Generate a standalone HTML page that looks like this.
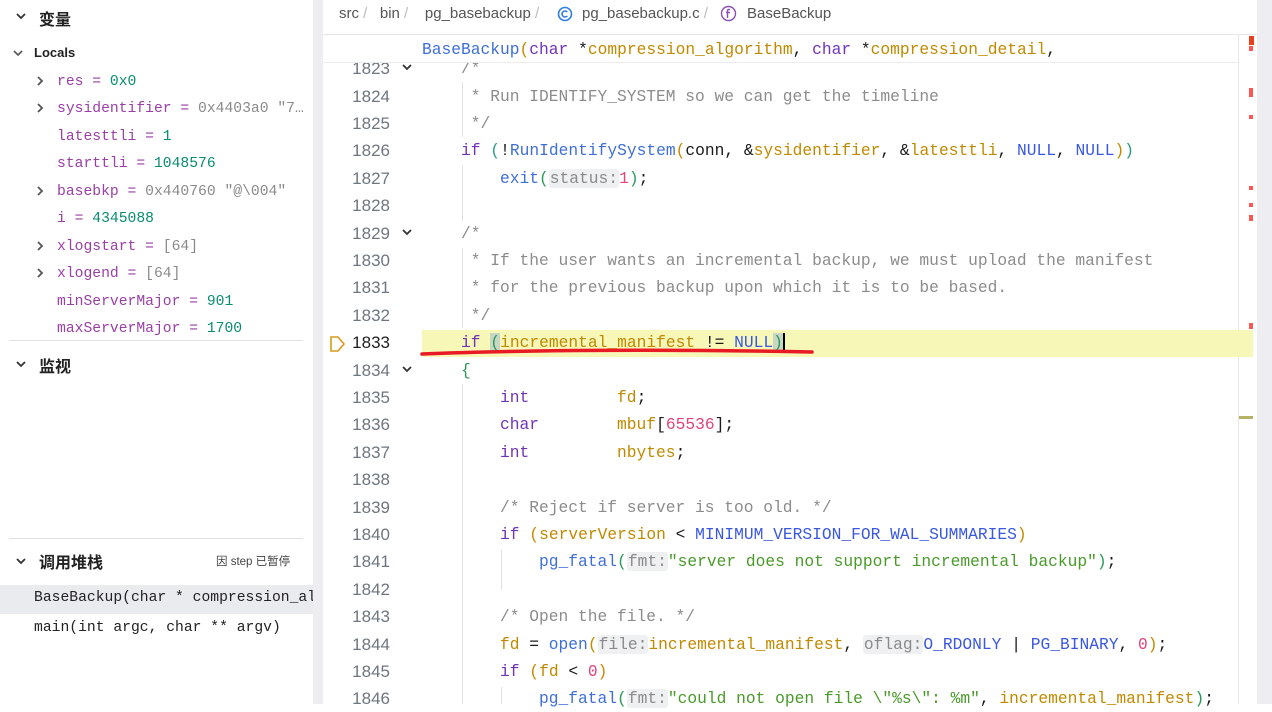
<!DOCTYPE html>
<html><head><meta charset="utf-8"><style>
*{margin:0;padding:0;box-sizing:border-box}
body{width:1272px;height:704px;overflow:hidden;background:#fff;position:relative;font-family:"Liberation Sans","Noto Sans CJK SC",sans-serif}
.abs{position:absolute}
.mono{font-family:"Liberation Mono","DejaVu Sans Mono",monospace;white-space:pre}
.left{left:0;top:0;width:313px;height:704px;background:#fff}
.sb{left:313px;top:0;width:10px;height:704px;background:#eeeef2}
.v{left:57px;font-size:14.7px;line-height:20px;color:#9a3fa6}
.v .n{color:#0a8c72}.v .g{color:#8a8a8a}
.code{font-size:16.25px;color:#1a1a1a}
.ln{position:absolute;left:330px;width:60px;text-align:right;font-family:"Liberation Sans",sans-serif;font-size:17px;color:#6e7681}
.k{color:#6f33b8}.c{color:#8c8c8c}.f{color:#3f6fd6}.p{color:#c08a00}.nl{color:#3a58e0}.num{color:#e0457b}.s{color:#4a9a2a}.gr{color:#2a9a5a}
.h{background:#eef0f2;color:#8a8a8a;border-radius:3px;padding:0 1px}
.row{position:absolute;left:422px;height:27px;line-height:27px}
</style></head><body>
<div class="abs left"></div>
<div class="abs sb"></div>
<svg class="abs" style="left:15px;top:11px" width="12" height="10"><path d="M2 3l4 4 4-4" stroke="#333" stroke-width="1.8" fill="none"/></svg>
<div class="abs" style="left:39px;top:6px;font-size:16px;font-weight:bold;color:#222">变量</div>
<svg class="abs" style="left:12px;top:48px" width="12" height="10"><path d="M2 3l4 4 4-4" stroke="#555" stroke-width="1.6" fill="none"/></svg>
<div class="abs" style="left:34px;top:45px;font-size:13px;font-weight:bold;color:#222">Locals</div>
<svg class="abs" style="left:0;top:1px" width="60" height="340">
<g stroke="#555" stroke-width="1.8" fill="none">
<path d="M38 76l4 4-4 4"/><path d="M38 103l4 4-4 4"/><path d="M38 186l4 4-4 4"/><path d="M38 241l4 4-4 4"/><path d="M38 268l4 4-4 4"/></g></svg>
<div class="abs v mono" style="top:72px">res = <span class="n">0x0</span></div>
<div class="abs v mono" style="top:99px">sysidentifier = <span class="g">0x4403a0 "7…</span></div>
<div class="abs v mono" style="top:127px">latesttli = <span class="n">1</span></div>
<div class="abs v mono" style="top:154px">starttli = <span class="n">1048576</span></div>
<div class="abs v mono" style="top:182px">basebkp = <span class="g">0x440760 "@\004"</span></div>
<div class="abs v mono" style="top:209px">i = <span class="n">4345088</span></div>
<div class="abs v mono" style="top:237px">xlogstart = <span class="g">[64]</span></div>
<div class="abs v mono" style="top:264px">xlogend = <span class="g">[64]</span></div>
<div class="abs v mono" style="top:292px">minServerMajor = <span class="n">901</span></div>
<div class="abs v mono" style="top:319px">maxServerMajor = <span class="n">1700</span></div>
<div class="abs" style="left:9px;top:340px;width:294px;height:1px;background:#dfe1e5"></div>
<svg class="abs" style="left:15px;top:359px" width="12" height="10"><path d="M2 3l4 4 4-4" stroke="#333" stroke-width="1.8" fill="none"/></svg>
<div class="abs" style="left:39px;top:353px;font-size:16px;font-weight:bold;color:#222">监视</div>
<div class="abs" style="left:9px;top:538px;width:294px;height:1px;background:#dfe1e5"></div>
<svg class="abs" style="left:15px;top:556px" width="12" height="10"><path d="M2 3l4 4 4-4" stroke="#333" stroke-width="1.8" fill="none"/></svg>
<div class="abs" style="left:39px;top:549px;font-size:16px;font-weight:bold;color:#222">调用堆栈</div>
<div class="abs" style="left:216px;top:553px;font-size:11.5px;color:#444">因 step 已暂停</div>
<div class="abs" style="left:0;top:585px;width:313px;height:29px;background:#e9ebef"></div>
<div class="abs mono" style="left:34px;top:590px;font-size:14.7px;color:#222;width:279px;overflow:hidden">BaseBackup(char * compression_algorithm</div>
<div class="abs mono" style="left:34px;top:620px;font-size:14.7px;color:#222">main(int argc, char ** argv)</div>
<!-- breadcrumb -->
<div class="abs" style="left:323px;top:0;width:934px;height:35px;border-bottom:1px solid #e6e6e6"></div>
<div class="abs" style="left:339px;top:5px;font-size:15px;color:#555;white-space:pre">src <span style="color:#bbb">/</span>   bin <span style="color:#bbb">/</span>    pg_basebackup <span style="color:#bbb">/</span></div>
<svg class="abs" style="left:557px;top:6px" width="16" height="16"><circle cx="8" cy="8" r="6.5" stroke="#2f7de1" stroke-width="1.6" fill="none"/><path d="M10.3 6A3 3 0 1 0 10.3 10" stroke="#2f7de1" stroke-width="1.6" fill="none"/></svg>
<div class="abs" style="left:582px;top:5px;font-size:15px;color:#555;white-space:pre">pg_basebackup.c <span style="color:#bbb">/</span></div>
<svg class="abs" style="left:720px;top:5px" width="17" height="17"><circle cx="8.5" cy="8.5" r="7" stroke="#8b4fb8" stroke-width="1.4" fill="none"/><path d="M10 4.5h-1.2c-.8 0-1.3.5-1.3 1.3V13M6 7.5h4" stroke="#8b4fb8" stroke-width="1.4" fill="none"/></svg>
<div class="abs" style="left:747px;top:5px;font-size:15px;color:#555">BaseBackup</div>
<!-- editor -->
<div class="abs" style="left:323px;top:35px;width:915px;height:28px;border-bottom:1px solid #ececec;background:#fff;z-index:3"></div>
<div class="abs mono code" style="left:422px;top:36px;line-height:27px;z-index:4"><span class="f">BaseBackup</span><span style="color:#c58a00">(</span><span class="k">char</span> *<span class="p">compression_algorithm</span>, <span class="k">char</span> *<span class="p">compression_detail</span>,</div>
<div class="abs" style="left:1238px;top:35px;width:1px;height:669px;background:#e8e8e8"></div>
<div class="abs" style="left:1257px;top:0;width:15px;height:704px;background:#eeeef2"></div>
<div class="abs" style="left:422px;top:330px;width:831px;height:27px;background:#f7f7b8"></div>
<div class="abs" style="left:1249px;top:36px;width:5px;height:9px;background:#e8401c"></div>
<div class="abs" style="left:1249px;top:46px;width:4px;height:5px;background:#f55"></div>
<div class="abs" style="left:1249px;top:88px;width:4px;height:9px;background:#f55"></div>
<div class="abs" style="left:1249px;top:115px;width:4px;height:4px;background:#f55"></div>
<div class="abs" style="left:1249px;top:186px;width:4px;height:4px;background:#f55"></div>
<div class="abs" style="left:1249px;top:203px;width:4px;height:4px;background:#f55"></div>
<div class="abs" style="left:1249px;top:215px;width:4px;height:6px;background:#f55"></div>
<div class="abs" style="left:1249px;top:323px;width:4px;height:6px;background:#f55"></div>
<div class="abs" style="left:1239px;top:416px;width:14px;height:3px;background:#b5b36a"></div>
<div class="abs" style="left:462px;top:82px;width:1px;height:55px;background:#e2e2e2"></div>
<div class="abs" style="left:462px;top:166px;width:1px;height:55px;background:#e2e2e2"></div>
<div class="abs" style="left:462px;top:248px;width:1px;height:80px;background:#e2e2e2"></div>
<div class="abs" style="left:462px;top:384px;width:1px;height:320px;background:#e2e2e2"></div>
<div class="abs" style="left:501px;top:550px;width:1px;height:40px;background:#e2e2e2"></div>
<div class="abs" style="left:501px;top:687px;width:1px;height:17px;background:#e2e2e2"></div>
<div class="ln" style="top:59px">1823</div>
<div class="ln" style="top:87px">1824</div><div class="ln" style="top:114px">1825</div><div class="ln" style="top:141px">1826</div><div class="ln" style="top:169px">1827</div><div class="ln" style="top:196px">1828</div><div class="ln" style="top:224px">1829</div><div class="ln" style="top:251px">1830</div><div class="ln" style="top:278px">1831</div><div class="ln" style="top:306px">1832</div><div class="ln" style="top:333px;color:#222">1833</div><div class="ln" style="top:361px">1834</div><div class="ln" style="top:388px">1835</div><div class="ln" style="top:415px">1836</div><div class="ln" style="top:443px">1837</div><div class="ln" style="top:470px">1838</div><div class="ln" style="top:498px">1839</div><div class="ln" style="top:525px">1840</div><div class="ln" style="top:552px">1841</div><div class="ln" style="top:580px">1842</div><div class="ln" style="top:607px">1843</div><div class="ln" style="top:635px">1844</div><div class="ln" style="top:662px">1845</div><div class="ln" style="top:689px">1846</div>
<svg class="abs" style="left:400px;top:60px" width="16" height="320"><g stroke="#333" stroke-width="1.8" fill="none"><path d="M3 5l4 4 4-4"/><path d="M3 170l4 4 4-4"/><path d="M3 307l4 4 4-4"/></g></svg>
<svg class="abs" style="left:329px;top:335px" width="18" height="18"><path d="M2 2h7l6 7-6 7H2z" stroke="#d99a1c" stroke-width="1.6" fill="none"/></svg>
<div class="abs mono code" style="left:0;top:0;width:1238px;height:704px">
<div class="row c" style="top:55px">    /*</div>
<div class="row c" style="top:83px">     * Run IDENTIFY_SYSTEM so we can get the timeline</div>
<div class="row c" style="top:110px">     */</div>
<div class="row" style="top:137px">    <span class="k">if</span> <span style="color:#2a9a8a">(</span>!<span class="f">RunIdentifySystem</span><span style="color:#c58a00">(</span>conn, &amp;<span class="p">sysidentifier</span>, &amp;<span class="p">latesttli</span>, <span class="nl">NULL</span>, <span class="nl">NULL</span><span style="color:#c58a00">)</span><span style="color:#2a9a8a">)</span></div>
<div class="row" style="top:165px">        <span class="f">exit</span><span class="gr">(</span><span class="h">status:</span><span class="num">1</span><span class="gr">)</span>;</div>
<div class="row c" style="top:220px">    /*</div>
<div class="row c" style="top:247px">     * If the user wants an incremental backup, we must upload the manifest</div>
<div class="row c" style="top:274px">     * for the previous backup upon which it is to be based.</div>
<div class="row c" style="top:302px">     */</div>
<div class="row" style="top:329px">    <span class="k">if</span> <span class="gr" style="background:#c9d6c4">(</span><span class="p">incremental_manifest</span> != <span class="nl">NULL</span><span class="gr" style="background:#c9d6c4">)</span><span style="border-left:2px solid #000"></span></div>
<div class="row gr" style="top:357px">    {</div>
<div class="row" style="top:384px">        <span class="k">int</span>         <span class="p">fd</span>;</div>
<div class="row" style="top:411px">        <span class="k">char</span>        <span class="p">mbuf</span>[<span class="num">65536</span>];</div>
<div class="row" style="top:439px">        <span class="k">int</span>         <span class="p">nbytes</span>;</div>
<div class="row c" style="top:494px">        /* Reject if server is too old. */</div>
<div class="row" style="top:521px">        <span class="k">if</span> <span style="color:#c58a00">(</span><span class="p">serverVersion</span> &lt; <span class="nl">MINIMUM_VERSION_FOR_WAL_SUMMARIES</span><span style="color:#c58a00">)</span></div>
<div class="row" style="top:548px">            <span class="f">pg_fatal</span><span class="gr">(</span><span class="h">fmt:</span><span class="s">"server does not support incremental backup"</span><span class="gr">)</span>;</div>
<div class="row c" style="top:603px">        /* Open the file. */</div>
<div class="row" style="top:631px">        <span class="p">fd</span> = <span class="f">open</span><span style="color:#c58a00">(</span><span class="h">file:</span><span class="p">incremental_manifest</span>, <span class="h">oflag:</span><span class="nl">O_RDONLY</span> | <span class="nl">PG_BINARY</span>, <span class="num">0</span><span style="color:#c58a00">)</span>;</div>
<div class="row" style="top:658px">        <span class="k">if</span> <span style="color:#c58a00">(</span><span class="p">fd</span> &lt; <span class="num">0</span><span style="color:#c58a00">)</span></div>
<div class="row" style="top:685px">            <span class="f">pg_fatal</span><span class="gr">(</span><span class="h">fmt:</span><span class="s">"could not open file \"%s\": %m"</span>, <span class="p">incremental_manifest</span><span class="gr">)</span>;</div>
</div>
<svg class="abs" style="left:420px;top:346px" width="400" height="14"><path d="M2 8 C100 4 250 3 392 6" stroke="#e81a24" stroke-width="3.5" fill="none" stroke-linecap="round"/></svg>
</body></html>
